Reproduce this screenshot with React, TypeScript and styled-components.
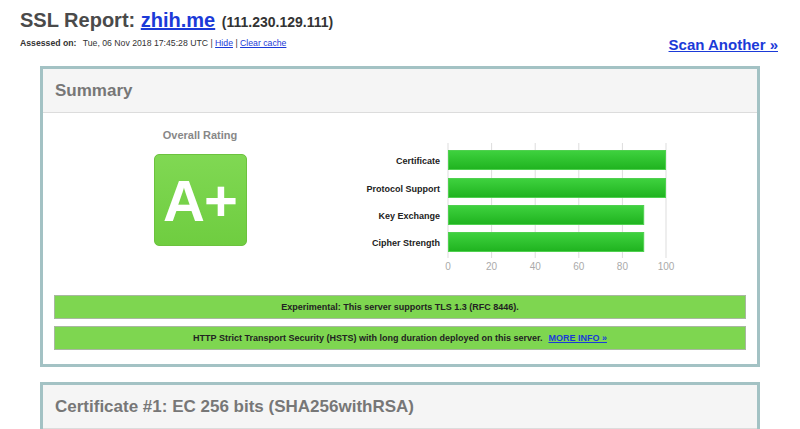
import styled, { createGlobalStyle } from "styled-components";

const GlobalStyle = createGlobalStyle`
  html, body {
    margin: 0;
    padding: 0;
    background: #fff;
    font-family: "Liberation Sans", Arial, sans-serif;
  }
`;

const scores = [
  { label: "Certificate", value: 100 },
  { label: "Protocol Support", value: 100 },
  { label: "Key Exchange", value: 90 },
  { label: "Cipher Strength", value: 90 },
];

const Page = styled.div`
  padding: 0 22px 0 20px;
`;

const Header = styled.div`
  padding-top: 7px;
`;

const Title = styled.h1`
  margin: 0;
  font-size: 20px;
  line-height: 26px;
  font-weight: bold;
  color: #4a4a4a;
  a {
    color: #1b3ad8;
    text-decoration: underline;
  }
  small {
    font-size: 14px;
    color: #333;
    margin-left: 1px;
  }
`;

const SubRow = styled.div`
  display: flex;
  justify-content: space-between;
  align-items: flex-end;
  margin-top: 1px;
`;

const Assessed = styled.div`
  font-size: 8.7px;
  color: #333;
  padding-bottom: 5px;
  b {
    margin-right: 4px;
  }
  a {
    color: #1b3ad8;
  }
`;

const ScanLink = styled.a`
  font-size: 15px;
  font-weight: bold;
  color: #1b3ad8;
  text-decoration: underline;
`;

const ReportBox = styled.section<{ $top: number }>`
  margin: ${(p) => p.$top}px 18px 0 20px;
  border: 3px solid #a3c2c4;
  background: #fff;
`;

const BoxHeader = styled.div`
  background: #f5f5f5;
  border-bottom: 1px solid #dcdcdc;
  height: 43px;
  display: flex;
  align-items: center;
  padding-left: 12px;
  font-size: 17px;
  font-weight: bold;
  color: #777;
`;

const SummaryBody = styled.div`
  padding: 14px 11px 14px 11px;
`;

const TopRow = styled.div`
  display: flex;
  align-items: flex-start;
`;

const RatingCol = styled.div`
  width: 292px;
  display: flex;
  flex-direction: column;
  align-items: center;
`;

const RatingLabel = styled.div`
  font-size: 11px;
  font-weight: bold;
  color: #888;
  margin-top: 2px;
`;

const Grade = styled.div`
  margin-top: 13px;
  width: 91px;
  height: 90px;
  border: 1px solid #6cc23e;
  border-radius: 5px;
  background: linear-gradient(#80d853, #6fcd40);
  color: #fff;
  font-size: 58px;
  font-weight: bold;
  display: flex;
  align-items: center;
  justify-content: center;
  letter-spacing: -1px;
`;

const ChartWrap = styled.div`
  margin-top: 13px;
`;

const Notice = styled.div<{ $gap: number }>`
  margin-top: ${(p) => p.$gap}px;
  background: #7ed650;
  border: 1px solid #a8b8a0;
  height: 22px;
  display: flex;
  align-items: center;
  justify-content: center;
  font-size: 9px;
  font-weight: bold;
  color: #222;
  a {
    color: #1b3ad8;
    margin-left: 6px;
    text-decoration: underline;
  }
`;

function ScoreChart() {
  const x0 = 102;
  const unit = 2.18;
  const rows = [10, 38, 65, 92];
  return (
    <svg width={340} height={136} viewBox="0 0 340 136">
      <defs>
        <linearGradient id="bar" x1="0" y1="0" x2="0" y2="1">
          <stop offset="0" stopColor="#3fd23f" />
          <stop offset="1" stopColor="#1fb31f" />
        </linearGradient>
      </defs>
      {[0, 20, 40, 60, 80, 100].map((t) => (
        <g key={t}>
          <line x1={x0 + t * unit} y1={3} x2={x0 + t * unit} y2={118} stroke="#ddd" strokeWidth={1} />
          <text
            x={x0 + t * unit}
            y={130}
            fontSize={10}
            fill="#aaa"
            textAnchor="middle"
            fontFamily="Liberation Sans, Arial, sans-serif"
          >
            {t}
          </text>
        </g>
      ))}
      {scores.map((s, i) => (
        <g key={s.label}>
          <rect
            x={x0 + 0.5}
            y={rows[i] + 0.5}
            width={s.value * unit - 1}
            height={19}
            fill="url(#bar)"
            stroke="#4fd04f"
            strokeWidth={1}
          />
          <text
            x={x0 - 8}
            y={rows[i] + 13.5}
            fontSize={9}
            fontWeight="bold"
            fill="#222"
            textAnchor="end"
            fontFamily="Liberation Sans, Arial, sans-serif"
          >
            {s.label}
          </text>
        </g>
      ))}
    </svg>
  );
}

export default function App() {
  return (
    <Page>
      <GlobalStyle />
      <Header>
        <Title>
          SSL Report: <a href="#">zhih.me</a> <small>(111.230.129.111)</small>
        </Title>
        <SubRow>
          <Assessed>
            <b>Assessed on:</b> Tue, 06 Nov 2018 17:45:28 UTC | <a href="#">Hide</a> |{" "}
            <a href="#">Clear cache</a>
          </Assessed>
          <ScanLink href="#">Scan Another »</ScanLink>
        </SubRow>
      </Header>

      <ReportBox $top={13}>
        <BoxHeader>Summary</BoxHeader>
        <SummaryBody>
          <TopRow>
            <RatingCol>
              <RatingLabel>Overall Rating</RatingLabel>
              <Grade>A+</Grade>
            </RatingCol>
            <ChartWrap>
              <ScoreChart />
            </ChartWrap>
          </TopRow>
          <Notice $gap={15}>Experimental: This server supports TLS 1.3 (RFC 8446).</Notice>
          <Notice $gap={7}>
            HTTP Strict Transport Security (HSTS) with long duration deployed on this server.
            <a href="#">MORE INFO »</a>
          </Notice>
        </SummaryBody>
      </ReportBox>

      <ReportBox $top={15}>
        <BoxHeader>Certificate #1: EC 256 bits (SHA256withRSA)</BoxHeader>
      </ReportBox>
    </Page>
  );
}
